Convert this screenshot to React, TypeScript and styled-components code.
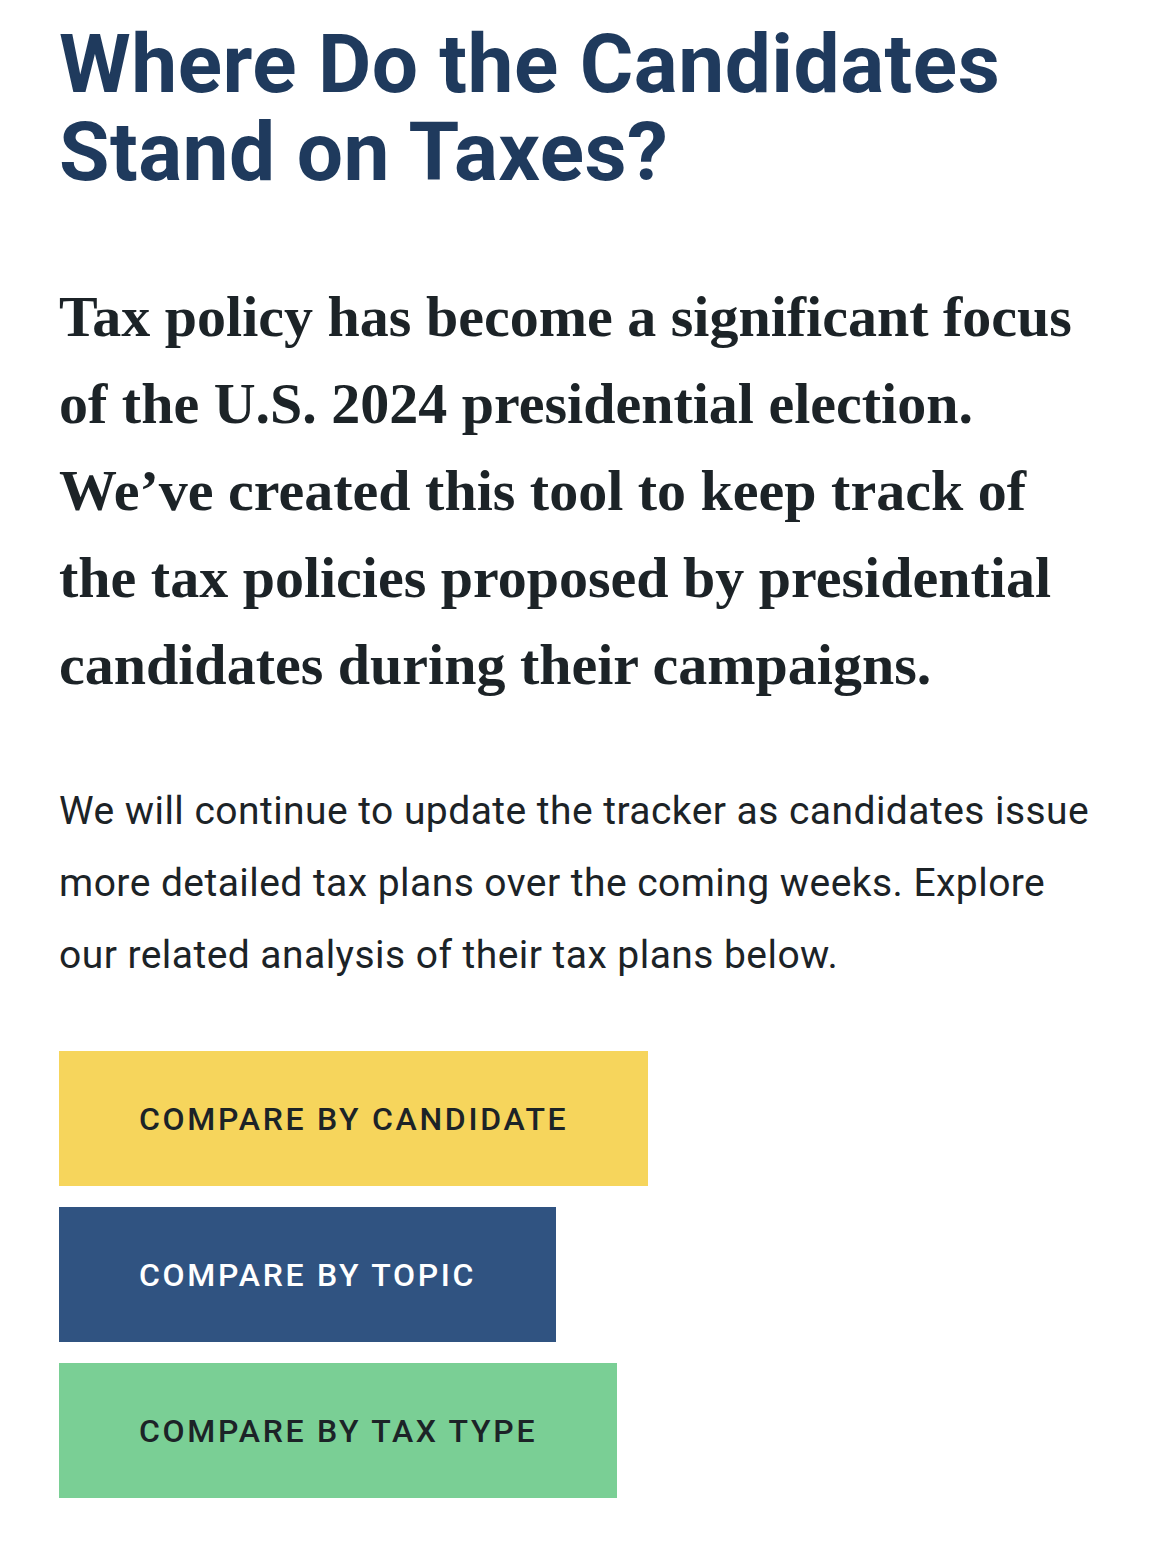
import React from 'react'
import styled, { createGlobalStyle } from 'styled-components'

const GlobalStyle = createGlobalStyle`
  html, body {
    margin: 0;
    padding: 0;
    background: #ffffff;
  }
`

const Page = styled.div`
  padding: 20px 59px 60px 59px;
  color: #1c2327;
`

const Title = styled.h1`
  margin: 0;
  font-family: Roboto, "Liberation Sans", sans-serif;
  font-weight: 700;
  font-size: 82px;
  line-height: 88px;
  color: #1f3a5d;
  letter-spacing: 0.5px;
`

const Lede = styled.p`
  margin: 77px 0 0 0;
  font-family: "Liberation Serif", "Times New Roman", serif;
  font-weight: 700;
  font-size: 58px;
  line-height: 87px;
  color: #1c2327;
`

const Body = styled.p`
  margin: 67px 0 0 0;
  font-family: Roboto, "Liberation Sans", sans-serif;
  font-weight: 400;
  font-size: 39px;
  line-height: 72px;
  letter-spacing: 0.45px;
  color: #1c2327;
`

const Buttons = styled.div`
  margin-top: 60px;
  display: flex;
  flex-direction: column;
  align-items: flex-start;
  gap: 21px;
`

const CompareButton = styled.a<{ $bg: string; $fg: string }>`
  display: flex;
  align-items: center;
  height: 135px;
  padding: 0 80px;
  box-sizing: border-box;
  background: ${({ $bg }) => $bg};
  color: ${({ $fg }) => $fg};
  font-family: Roboto, "Liberation Sans", sans-serif;
  font-weight: 500;
  font-size: 32px;
  letter-spacing: 2.7px;
  text-transform: uppercase;
  text-decoration: none;
`

export default function App() {
  return (
    <Page>
      <GlobalStyle />
      <Title>Where Do the Candidates Stand on Taxes?</Title>
      <Lede>
        Tax policy has become a significant focus of the U.S. 2024 presidential election.
        We’ve created this tool to keep track of the tax policies proposed by presidential
        candidates during their campaigns.
      </Lede>
      <Body>
        We will continue to update the tracker as candidates issue more detailed tax plans
        over the coming weeks. Explore our related analysis of their tax plans below.
      </Body>
      <Buttons>
        <CompareButton $bg="#f6d55c" $fg="#1c2327">Compare by Candidate</CompareButton>
        <CompareButton $bg="#305381" $fg="#ffffff">Compare by Topic</CompareButton>
        <CompareButton $bg="#7acf95" $fg="#1c2327">Compare by Tax Type</CompareButton>
      </Buttons>
    </Page>
  )
}
